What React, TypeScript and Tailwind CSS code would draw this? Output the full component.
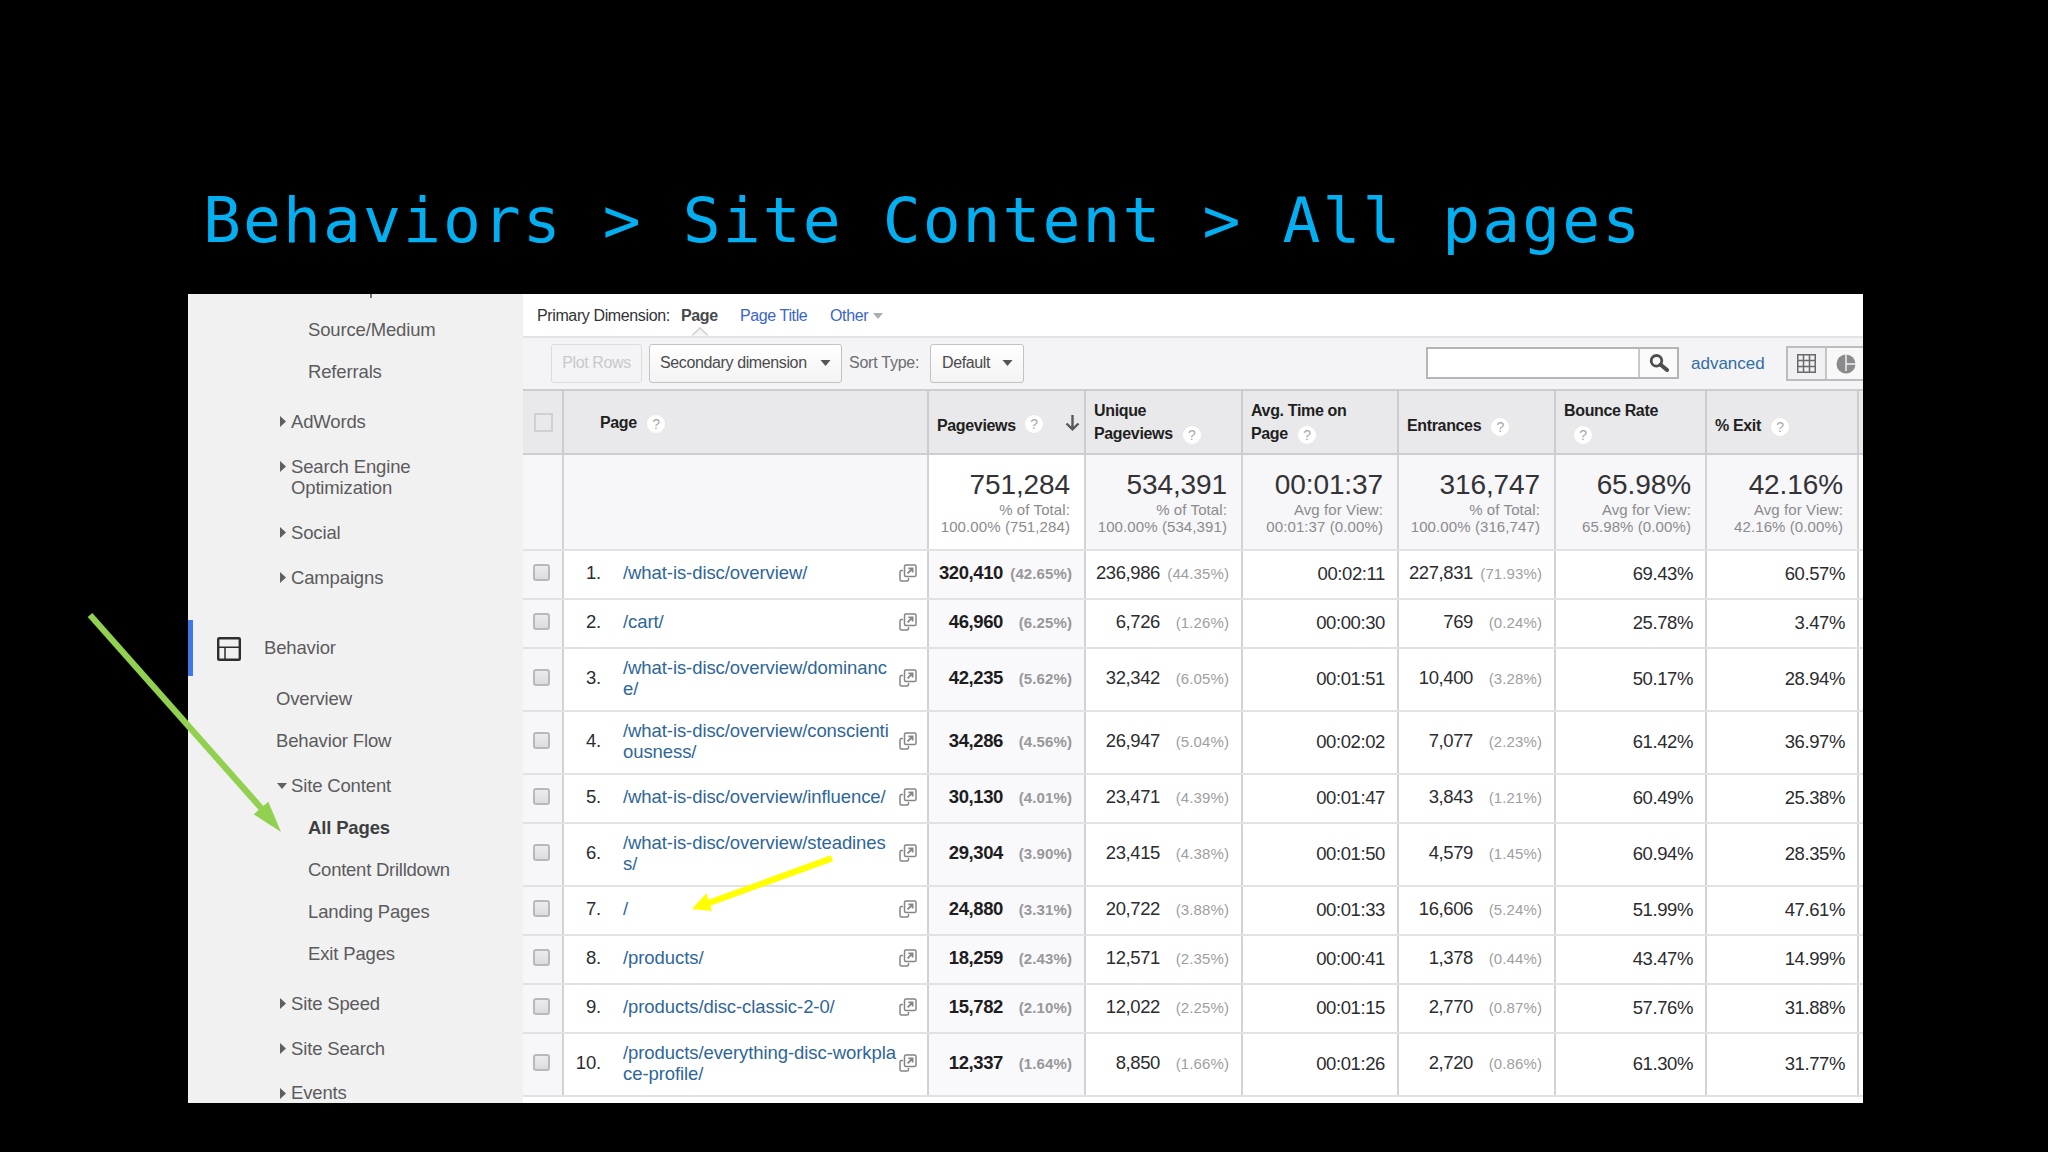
import type { ReactNode } from 'react';

type NavItem = {
  label: string;
  className: string;
  arrow?: 'right' | 'down';
};

const acquisitionItems: NavItem[] = [
  { label: 'Source/Medium', className: 'mt-[21px] pl-[120px]' },
  { label: 'Referrals', className: 'mt-[21px] pl-[120px]' },
  { label: 'AdWords', className: 'mt-[29px] pl-[92px]', arrow: 'right' },
  { label: 'Search Engine Optimization', className: 'mt-6 pl-[92px]', arrow: 'right' },
  { label: 'Social', className: 'mt-6 pl-[92px]', arrow: 'right' },
  { label: 'Campaigns', className: 'mt-6 pl-[92px]', arrow: 'right' },
];

const behaviorItems: NavItem[] = [
  { label: 'Overview', className: 'mt-[12px] pl-[88px]' },
  { label: 'Behavior Flow', className: 'mt-[21px] pl-[88px]' },
  { label: 'Site Content', className: 'mt-6 pl-[90px]', arrow: 'down' },
  { label: 'All Pages', className: 'mt-[21px] pl-[120px] font-bold text-[#3f3f41]' },
  { label: 'Content Drilldown', className: 'mt-[21px] pl-[120px] tracking-[-0.25px]' },
  { label: 'Landing Pages', className: 'mt-[21px] pl-[120px]' },
  { label: 'Exit Pages', className: 'mt-[21px] pl-[120px]' },
  { label: 'Site Speed', className: 'mt-[29px] pl-[92px]', arrow: 'right' },
  { label: 'Site Search', className: 'mt-6 pl-[92px]', arrow: 'right' },
  { label: 'Events', className: 'mt-6 pl-[92px] leading-[19px]', arrow: 'right' },
];

const totals = [
  { value: '751,284', label: '% of Total:', detail: '100.00% (751,284)' },
  { value: '534,391', label: '% of Total:', detail: '100.00% (534,391)' },
  { value: '00:01:37', label: 'Avg for View:', detail: '00:01:37 (0.00%)' },
  { value: '316,747', label: '% of Total:', detail: '100.00% (316,747)' },
  { value: '65.98%', label: 'Avg for View:', detail: '65.98% (0.00%)' },
  { value: '42.16%', label: 'Avg for View:', detail: '42.16% (0.00%)' },
];

type Row = {
  page: string[];
  views: [string, string];
  unique: [string, string];
  time: string;
  entrances: [string, string];
  bounce: string;
  exit: string;
};

const rows: Row[] = [
  { page: ['/what-is-disc/overview/'], views: ['320,410', '42.65%'], unique: ['236,986', '44.35%'], time: '00:02:11', entrances: ['227,831', '71.93%'], bounce: '69.43%', exit: '60.57%' },
  { page: ['/cart/'], views: ['46,960', '6.25%'], unique: ['6,726', '1.26%'], time: '00:00:30', entrances: ['769', '0.24%'], bounce: '25.78%', exit: '3.47%' },
  { page: ['/what-is-disc/overview/dominanc', 'e/'], views: ['42,235', '5.62%'], unique: ['32,342', '6.05%'], time: '00:01:51', entrances: ['10,400', '3.28%'], bounce: '50.17%', exit: '28.94%' },
  { page: ['/what-is-disc/overview/conscienti', 'ousness/'], views: ['34,286', '4.56%'], unique: ['26,947', '5.04%'], time: '00:02:02', entrances: ['7,077', '2.23%'], bounce: '61.42%', exit: '36.97%' },
  { page: ['/what-is-disc/overview/influence/'], views: ['30,130', '4.01%'], unique: ['23,471', '4.39%'], time: '00:01:47', entrances: ['3,843', '1.21%'], bounce: '60.49%', exit: '25.38%' },
  { page: ['/what-is-disc/overview/steadines', 's/'], views: ['29,304', '3.90%'], unique: ['23,415', '4.38%'], time: '00:01:50', entrances: ['4,579', '1.45%'], bounce: '60.94%', exit: '28.35%' },
  { page: ['/'], views: ['24,880', '3.31%'], unique: ['20,722', '3.88%'], time: '00:01:33', entrances: ['16,606', '5.24%'], bounce: '51.99%', exit: '47.61%' },
  { page: ['/products/'], views: ['18,259', '2.43%'], unique: ['12,571', '2.35%'], time: '00:00:41', entrances: ['1,378', '0.44%'], bounce: '43.47%', exit: '14.99%' },
  { page: ['/products/disc-classic-2-0/'], views: ['15,782', '2.10%'], unique: ['12,022', '2.25%'], time: '00:01:15', entrances: ['2,770', '0.87%'], bounce: '57.76%', exit: '31.88%' },
  { page: ['/products/everything-disc-workpla', 'ce-profile/'], views: ['12,337', '1.64%'], unique: ['8,850', '1.66%'], time: '00:01:26', entrances: ['2,720', '0.86%'], bounce: '61.30%', exit: '31.77%' },
];

const columns = 'grid grid-cols-[41px_365px_157px_157px_156px_157px_151px_152px_1fr]';

function NavRow({ label, className, arrow }: NavItem) {
  return (
    <div className={`flex ${className}`}>
      {arrow === 'right' && (
        <svg className="mt-[5px] mr-[5px] h-[11px] w-[6px] shrink-0" viewBox="0 0 6 11">
          <path d="M0 0L6 5.5L0 11Z" fill="#5f5f61" />
        </svg>
      )}
      {arrow === 'down' && (
        <svg className="mt-2 -ml-px mr-1 h-[6px] w-[10px] shrink-0" viewBox="0 0 10 6">
          <path d="M0 0H10L5 6Z" fill="#5f5f61" />
        </svg>
      )}
      <span className="max-w-[150px]">{label}</span>
    </div>
  );
}

function Sidebar() {
  return (
    <nav className="h-full w-[335px] shrink-0 overflow-hidden bg-[#f1f1f2] text-[18.5px] leading-[21px] tracking-[-0.15px] text-[#5b5b5d]">
      <div className="ml-[182px] h-1 w-[2px] bg-[#77777a]" />
      <div>
        {acquisitionItems.map((item) => (
          <NavRow key={item.label} {...item} />
        ))}
      </div>
      <div className="mt-8 flex h-14 items-center border-l-[5px] border-[#3f78e8]">
        <svg className="mt-[2px] ml-[24px] h-6 w-6" viewBox="0 0 24 24" fill="none" stroke="#2e2e30">
          <rect x="1.2" y="1.2" width="21.6" height="21.6" rx="1" strokeWidth="2.4" />
          <path d="M2 10.3H22M8 10.3V22" strokeWidth="1.5" />
        </svg>
        <span className="ml-[23px] pb-px">Behavior</span>
      </div>
      <div>
        {behaviorItems.map((item) => (
          <NavRow key={item.label} {...item} />
        ))}
      </div>
    </nav>
  );
}

function Help({ className = 'ml-[10px]' }: { className?: string }) {
  return (
    <span
      className={`inline-flex h-[18px] w-[18px] items-center justify-center rounded-full bg-white align-middle text-[14px] leading-none font-normal text-[#a9a7aa] ${className}`}
    >
      ?
    </span>
  );
}

function Caret({ className }: { className: string }) {
  return (
    <svg className={className} viewBox="0 0 10 6">
      <path d="M0 0H10L5 6Z" fill="currentColor" />
    </svg>
  );
}

function DimensionBar() {
  return (
    <div className="flex h-[42px] items-center bg-white pt-px pl-[14px] text-[16px] tracking-[-0.38px] text-[#333335]">
      <span className="w-[144px]">Primary Dimension:</span>
      <span className="relative w-[59px] font-bold text-[#48484a]">
        Page
        <svg className="absolute top-[23px] left-[11px] h-[9px] w-[16px]" viewBox="0 0 16 9">
          <path d="M0 8.5L8 1L16 8.5" fill="#f4f3f6" stroke="#cfcfd1" strokeWidth="1.3" />
        </svg>
      </span>
      <span className="w-[90px] text-[#3a64c8]">Page Title</span>
      <span className="text-[#3a64c8]">Other</span>
      <Caret className="ml-[5px] h-[6px] w-[10px] text-[#adadb0]" />
    </div>
  );
}

function Toolbar() {
  return (
    <div className="flex h-[53px] items-center border-t-2 border-[#e3e2e5] bg-[#f4f3f6] pb-px pl-[28px] text-[16px] tracking-[-0.38px]">
      <button className="h-[39px] w-[91px] rounded-[3px] border border-[#dcdbde] text-[#c9c8cb]">Plot Rows</button>
      <button className="ml-[7px] flex h-[39px] w-[193px] items-center rounded-[3px] border border-[#c3c2c5] bg-gradient-to-b from-white to-[#f3f3f4] pl-[10px] text-[#4b4b4d]">
        Secondary dimension
        <Caret className="ml-[13px] h-[6px] w-[11px] text-[#555557]" />
      </button>
      <span className="ml-[7px] w-[74px] tracking-[-0.25px] text-[#6d6d70]">Sort Type:</span>
      <button className="ml-[7px] flex h-[39px] w-[94px] items-center rounded-[3px] border border-[#c3c2c5] bg-gradient-to-b from-white to-[#f3f3f4] pl-[11px] text-[#4b4b4d]">
        Default
        <Caret className="ml-[12px] h-[6px] w-[11px] text-[#555557]" />
      </button>
      <div className="ml-auto flex h-[32px] w-[253px] border-2 border-[#b5b4b7] bg-white">
        <div className="flex-1" />
        <div className="flex w-[39px] items-center justify-center border-l-2 border-[#c9c8cb] bg-[#fafafa]">
          <svg className="h-[18px] w-[20px]" viewBox="0 0 20 18" fill="none" stroke="#4e4e50">
            <circle cx="7.5" cy="6.8" r="5.3" strokeWidth="2.8" />
            <path d="M11.5 10.5L18 16" strokeWidth="4" strokeLinecap="round" />
          </svg>
        </div>
      </div>
      <span className="ml-3 w-[75px] pt-[2px] text-[17px] tracking-normal text-[#2f6ea5]">advanced</span>
      <div className="ml-[20px] flex h-[35px] w-[77px] border-2 border-r-0 border-[#bdbcbf] bg-[#f8f8f9]">
        <div className="flex w-[39px] items-center justify-center border-r-2 border-[#c6c5c8] bg-[#f0eff1]">
          <svg className="h-[19px] w-[19px]" viewBox="0 0 19 19" fill="none" stroke="#69696b" strokeWidth="1.5">
            <path d="M.75.75H18.25V18.25H.75ZM6.5 1V18M12.5 1V18M1 6.5H18M1 12.5H18" />
          </svg>
        </div>
        <svg className="mt-[6px] ml-[9px] h-[20px] w-[20px]" viewBox="0 0 20 20">
          <circle cx="10" cy="10" r="9.5" fill="#8b8b8e" />
          <path d="M10 0V10H20M10 10V17" fill="none" stroke="#f4f3f6" strokeWidth="1.4" />
        </svg>
      </div>
    </div>
  );
}

function HeadCell({ children, className = '' }: { children?: ReactNode; className?: string }) {
  return <div className={`border-r-2 border-[#cdccd0] pl-[8px] ${className}`}>{children}</div>;
}

function TableHeader() {
  return (
    <div
      className={`${columns} h-[66px] border-y-2 border-[#cdccd0] bg-[#e9e8ea] text-[16px] leading-[23px] font-bold tracking-[-0.35px] text-[#1f1f22]`}
    >
      <HeadCell className="pt-[22px] pl-[11px]">
        <div className="h-[19px] w-[19px] border-2 border-[#d0cfd2]" />
      </HeadCell>
      <HeadCell className="pt-[20px] pl-[36px]">
        Page
        <Help />
      </HeadCell>
      <HeadCell className="flex pt-[23px]">
        <span className="w-[78px]">Pageviews</span>
        <Help className="mt-[1px] ml-[10px]" />
        <svg className="mt-[1px] ml-[22px] h-[16px] w-[15px]" viewBox="0 0 15 16" fill="none" stroke="#58585a" strokeWidth="2.4">
          <path d="M7.5 0V14M1.5 8.5L7.5 14.3L13.5 8.5" />
        </svg>
      </HeadCell>
      <HeadCell className="pt-[8px]">
        Unique
        <br />
        Pageviews
        <Help />
      </HeadCell>
      <HeadCell className="pt-[8px]">
        Avg. Time on
        <br />
        Page
        <Help />
      </HeadCell>
      <HeadCell className="pt-[23px]">
        Entrances
        <Help />
      </HeadCell>
      <HeadCell className="pt-[8px]">
        Bounce Rate
        <br />
        <Help />
      </HeadCell>
      <HeadCell className="pt-[23px]">
        % Exit
        <Help />
      </HeadCell>
    </div>
  );
}

function Totals() {
  return (
    <div className={`${columns} h-[94px] text-right text-[15px] leading-[17px] text-[#8b8b8e]`}>
      <div className="border-r-2 border-[#d3d1d5] bg-[#f7f6f9]" />
      <div className="border-r-2 border-[#d3d1d5] bg-[#f7f6f9]" />
      {totals.map((total, index) => (
        <div
          key={index}
          className={`border-r-2 border-[#d3d1d5] pt-[13px] pr-[14px] tracking-[0.1px] whitespace-nowrap ${
            index === 0 ? 'bg-white' : 'bg-[#f7f6f9]'
          }`}
        >
          <p className="text-[28px] leading-[33px] tracking-[-0.1px] text-[#333336]">{total.value}</p>
          <p>{total.label}</p>
          <p>{total.detail}</p>
        </div>
      ))}
    </div>
  );
}

function CountCell({ value, bold = false }: { value: [string, string]; bold?: boolean }) {
  return (
    <div
      className={`flex items-center justify-end border-r-2 border-[#d3d1d5] pr-3 pb-[3px] ${
        bold ? 'bg-[#f9f8fa] font-bold text-[#1d1d1f]' : ''
      }`}
    >
      <div className="flex items-baseline tracking-[-0.4px]">
        <span>{value[0]}</span>
        <span className={`w-[69px] text-right text-[15px] tracking-[0.1px] ${bold ? 'text-[#98979a]' : 'text-[#9f9ea1]'}`}>
          ({value[1]})
        </span>
      </div>
    </div>
  );
}

function TextCell({ value }: { value: string }) {
  return (
    <div className="flex items-center justify-end border-r-2 border-[#d3d1d5] pr-3 pb-[3px] tracking-[-0.4px]">{value}</div>
  );
}

function OpenPageIcon() {
  return (
    <svg className="h-[18px] w-[18px] shrink-0" viewBox="0 0 18 18" fill="none" stroke="#858588" strokeWidth="1.5">
      <rect x="5.5" y="1" width="11.5" height="11.5" rx="1.5" />
      <path d="M4 6.5H2.5Q1 6.5 1 8V15.5Q1 17 2.5 17H8Q9.5 17 9.5 15.5V14" />
      <path d="M8.6 9.4L13 5M9.4 4.4H13.6V8.6" strokeWidth="1.8" />
    </svg>
  );
}

function TableRow({ row, index }: { row: Row; index: number }) {
  return (
    <div
      className={`${columns} border-t-2 border-[#e2e1e4] text-[18.5px] leading-[21px] text-[#2c2c2f] ${
        row.page.length > 1 ? 'h-[63px]' : 'h-[49px]'
      }`}
    >
      <div className="flex items-center border-r-2 border-[#d3d1d5] bg-[#f7f6f9] pb-[5px] pl-[10px]">
        <div className="h-[17px] w-[17px] rounded-[3px] border-2 border-[#b9b8bb] bg-gradient-to-b from-[#ececee] to-[#dcdcde]" />
      </div>
      <div className="flex items-center border-r-2 border-[#d3d1d5] pr-[10px] pb-1">
        <span className="w-[37px] text-right tracking-[-0.2px]">{index + 1}.</span>
        <a className="ml-[22px] flex-1 tracking-[-0.08px] whitespace-nowrap text-[#2f6698]">
          {row.page.map((line) => (
            <span key={line} className="block">
              {line}
            </span>
          ))}
        </a>
        <OpenPageIcon />
      </div>
      <CountCell value={row.views} bold />
      <CountCell value={row.unique} />
      <TextCell value={row.time} />
      <CountCell value={row.entrances} />
      <TextCell value={row.bounce} />
      <TextCell value={row.exit} />
    </div>
  );
}

export default function App() {
  return (
    <main className="relative h-[1152px] w-[2048px] overflow-hidden bg-black font-['Liberation_Sans',Arial,sans-serif]">
      <h1 className="h-[294px] pt-[184px] pl-[203px] font-['DejaVu_Sans_Mono',monospace] text-[63px] leading-[74px] tracking-[2.05px] whitespace-pre text-[#03aff0]">
        Behaviors &gt; Site Content &gt; All pages
      </h1>

      <div className="ml-[188px] flex h-[809px] w-[1675px] overflow-hidden bg-white">
        <Sidebar />
        <section className="min-w-0 flex-1 overflow-hidden">
          <DimensionBar />
          <Toolbar />
          <TableHeader />
          <Totals />
          {rows.map((row, index) => (
            <TableRow key={row.page[0]} row={row} index={index} />
          ))}
          <div className="h-[8px] border-t-2 border-[#e2e1e4]" />
        </section>
      </div>

      {/* Callout arrows drawn over the report */}
      <svg className="pointer-events-none absolute inset-0 h-full w-full" viewBox="0 0 2048 1152">
        <path d="M90 615L262 809" stroke="#92d050" strokeWidth="6.3" />
        <path d="M281 832L268.3 801.7L253.7 814.3Z" fill="#92d050" />
        <path d="M832 858.3L708 903.3" stroke="#ffff00" strokeWidth="6.3" />
        <path d="M691.8 909L706.4 893.3L712 911Z" fill="#ffff00" />
      </svg>
    </main>
  );
}
